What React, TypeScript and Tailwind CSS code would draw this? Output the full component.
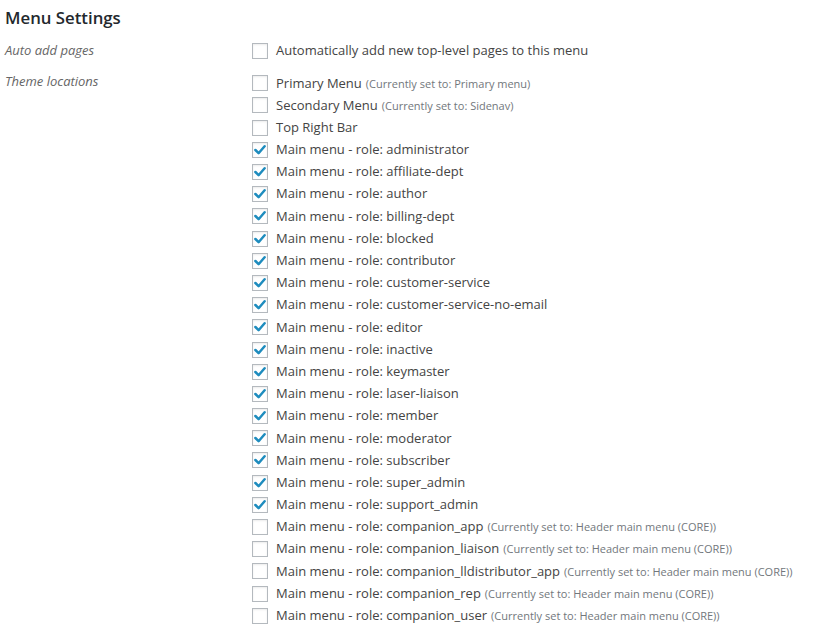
import React from "react";

type Loc = { label: string; checked?: boolean; note?: string };

const roles = [
  "administrator",
  "affiliate-dept",
  "author",
  "billing-dept",
  "blocked",
  "contributor",
  "customer-service",
  "customer-service-no-email",
  "editor",
  "inactive",
  "keymaster",
  "laser-liaison",
  "member",
  "moderator",
  "subscriber",
  "super_admin",
  "support_admin",
];

const companions = [
  "companion_app",
  "companion_liaison",
  "companion_lldistributor_app",
  "companion_rep",
  "companion_user",
];

const locations: Loc[] = [
  { label: "Primary Menu", note: "(Currently set to: Primary menu)" },
  { label: "Secondary Menu", note: "(Currently set to: Sidenav)" },
  { label: "Top Right Bar" },
  ...roles.map((r) => ({ label: `Main menu - role: ${r}`, checked: true })),
  ...companions.map((r) => ({
    label: `Main menu - role: ${r}`,
    note: "(Currently set to: Header main menu (CORE))",
  })),
];

function Box({ checked }: { checked?: boolean }) {
  return (
    <span className="w-[16px] h-[16px] shrink-0 border border-[#b4b9be] bg-white shadow-[inset_0_1px_2px_rgba(0,0,0,0.08)] flex items-center justify-center">
      {checked && (
        <svg width="14" height="14" viewBox="0 0 14 14">
          <path d="M2.4 7 L5.6 10.2 L11.6 3.2" fill="none" stroke="#1e8cbe" strokeWidth="2.5" strokeLinecap="round" strokeLinejoin="round" />
        </svg>
      )}
    </span>
  );
}

function Row({ loc }: { loc: Loc }) {
  return (
    <div className="h-[22.2px] flex items-center">
      <Box checked={loc.checked} />
      <span className="ml-[8px] text-[13px] text-[#444] whitespace-nowrap">
        {loc.label}
        {loc.note && <span className="ml-[4px] text-[11px] text-[#72777c]">{loc.note}</span>}
      </span>
    </div>
  );
}

export default function App() {
  return (
    <div className="w-[835px] h-[629px] bg-white overflow-hidden pl-[5px] font-['Open_Sans',sans-serif]">
      <div className="h-[36px] flex items-center text-[16.8px] font-semibold text-[#23282d]">Menu Settings</div>
      <div className="mt-[4px] flex">
        <div className="w-[247px] h-[22px] flex items-center text-[13px] italic text-[#666]">Auto add pages</div>
        <Row loc={{ label: "Automatically add new top-level pages to this menu" }} />
      </div>
      <div className="mt-[10px] flex">
        <div className="w-[247px] h-[20px] flex items-center text-[13px] italic text-[#666] self-start">Theme locations</div>
        <div className="flex flex-col">
          {locations.map((l) => (
            <Row key={l.label} loc={l} />
          ))}
        </div>
      </div>
    </div>
  );
}
